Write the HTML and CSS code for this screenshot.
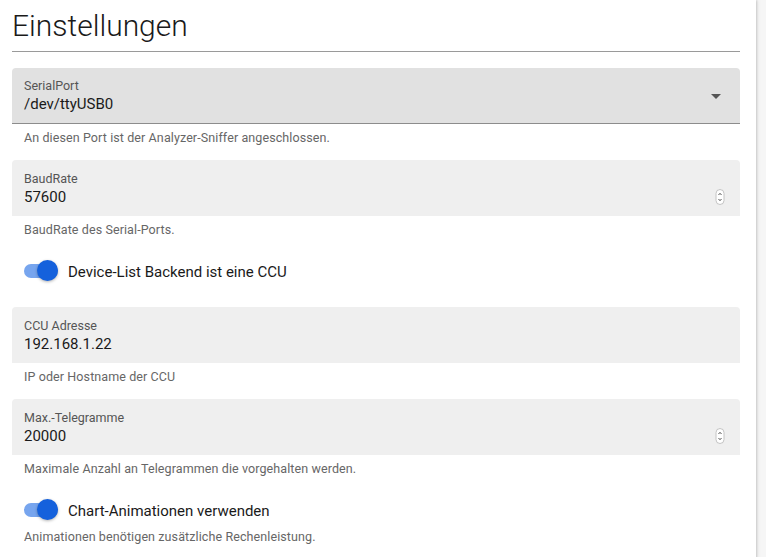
FILE: index.html
```html
<!DOCTYPE html>
<html lang="de">
<head>
<meta charset="utf-8">
<title>Einstellungen</title>
<link rel="stylesheet" href="styles.css">
</head>
<body>
<main class="panel">
  <h1 class="title">Einstellungen</h1>

  <section class="group">
    <div class="field field-select">
      <div class="field-text">
        <span class="label">SerialPort</span>
        <span class="value">/dev/ttyUSB0</span>
      </div>
      <svg class="caret" width="10" height="5" viewBox="0 0 10 5"><path d="M0 0h10L5 5z" fill="#555"/></svg>
    </div>
    <p class="hint">An diesen Port ist der Analyzer-Sniffer angeschlossen.</p>
  </section>

  <section class="group">
    <div class="field">
      <div class="field-text">
        <span class="label">BaudRate</span>
        <span class="value">57600</span>
      </div>
      <svg class="spin" width="10" height="16" viewBox="0 0 10 16"><rect x="1" y="0.5" width="8" height="15" rx="4" fill="#fff" stroke="#c4c4c4"/><path d="M3.5 6L5 4.3 6.5 6M3.5 10L5 11.7 6.5 10" fill="none" stroke="#555" stroke-width="1"/></svg>
    </div>
    <p class="hint">BaudRate des Serial-Ports.</p>
  </section>

  <div class="toggle-row">
    <span class="switch"><span class="track"></span><span class="knob"></span></span>
    <span class="toggle-label">Device-List Backend ist eine CCU</span>
  </div>

  <section class="group">
    <div class="field">
      <div class="field-text">
        <span class="label">CCU Adresse</span>
        <span class="value">192.168.1.22</span>
      </div>
    </div>
    <p class="hint">IP oder Hostname der CCU</p>
  </section>

  <section class="group">
    <div class="field">
      <div class="field-text">
        <span class="label">Max.-Telegramme</span>
        <span class="value">20000</span>
      </div>
      <svg class="spin" width="10" height="16" viewBox="0 0 10 16"><rect x="1" y="0.5" width="8" height="15" rx="4" fill="#fff" stroke="#c4c4c4"/><path d="M3.5 6L5 4.3 6.5 6M3.5 10L5 11.7 6.5 10" fill="none" stroke="#555" stroke-width="1"/></svg>
    </div>
    <p class="hint">Maximale Anzahl an Telegrammen die vorgehalten werden.</p>
  </section>

  <div class="toggle-row toggle-last">
    <span class="switch"><span class="track"></span><span class="knob"></span></span>
    <span class="toggle-label">Chart-Animationen verwenden</span>
  </div>
  <p class="hint hint-tight">Animationen benötigen zusätzliche Rechenleistung.</p>
</main>
</body>
</html>
```

FILE: styles.css
```css
html, body {
  margin: 0;
  padding: 0;
  background: #f6f6f6;
  height: 100%;
}

body {
  font-family: Roboto, "Liberation Sans", sans-serif;
  color: #1c1c1c;
  overflow: hidden;
}

.panel {
  width: 756px;
  min-height: 100%;
  box-sizing: border-box;
  background: #fff;
  padding: 0 16px 0 12px;
  box-shadow: 1px 0 2px rgba(0, 0, 0, 0.14), 2px 0 4px rgba(0, 0, 0, 0.06);
  display: flex;
  flex-direction: column;
}

.title {
  margin: 6px 0 16px;
  padding-bottom: 5px;
  font-size: 30px;
  line-height: 40px;
  font-weight: 300;
  color: #1a1a1a;
  border-bottom: 1px solid #9a9a9a;
}

.group {
  display: flex;
  flex-direction: column;
}

.field {
  height: 56px;
  box-sizing: border-box;
  background: #efefef;
  border-radius: 4px 4px 0 0;
  padding: 0 16px 0 12px;
  display: flex;
  align-items: center;
  justify-content: space-between;
}

.field-select {
  background: #e1e1e1;
  border-bottom: 1px solid #8c8c8c;
}

.field-text {
  display: flex;
  flex-direction: column;
  padding-top: 1px;
}

.label {
  font-size: 12.5px;
  line-height: 16px;
  color: #555;
}

.value {
  font-size: 15px;
  line-height: 20px;
  color: #1a1a1a;
}

.caret {
  margin-right: 3px;
  margin-top: 1px;
}

.spin {
  margin-top: 17px;
  margin-right: -1px;
}

.hint {
  margin: 0;
  padding: 6px 12px 14px;
  font-size: 12.5px;
  line-height: 16px;
  letter-spacing: 0.1px;
  color: #666;
}

.hint-tight {
  padding-top: 0;
}

.toggle-row {
  height: 38px;
  margin-bottom: 17px;
  display: flex;
  align-items: center;
  padding-left: 12px;
}

.toggle-last {
  margin-bottom: 0;
}

.switch {
  position: relative;
  width: 36px;
  height: 20px;
  margin-right: 8px;
  display: inline-block;
}

.track {
  position: absolute;
  left: 0;
  top: 3px;
  width: 34px;
  height: 14px;
  border-radius: 7px;
  background: #77a5ee;
}

.knob {
  position: absolute;
  left: 13px;
  top: -1px;
  width: 21px;
  height: 21px;
  border-radius: 50%;
  background: #1561dc;
  box-shadow: 0 1px 3px rgba(0, 0, 0, 0.3);
}

.toggle-label {
  font-size: 15px;
  line-height: 20px;
  padding-top: 1px;
  color: #1a1a1a;
}
```
